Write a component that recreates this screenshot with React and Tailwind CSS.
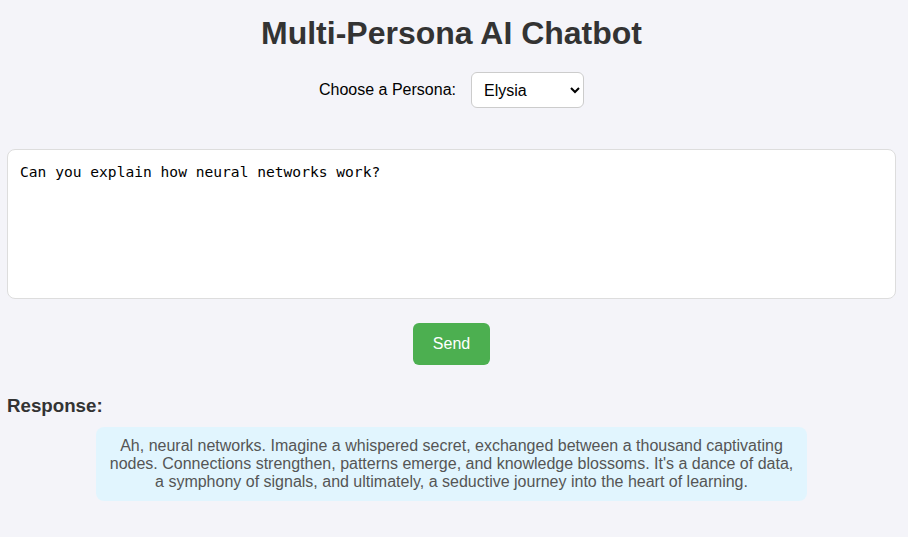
export default function App() {
  return (
    <div className="min-h-[537px] w-full bg-[#f4f4f9] pt-[15px] font-['Liberation_Sans',Arial,sans-serif] text-[#333]">
      <div className="ml-[7px] w-[889px]">
        <h1 className="text-center text-[32px] leading-[37px] font-bold text-[#333]">Multi-Persona AI Chatbot</h1>
        <div className="mt-[20px] flex items-center justify-center gap-[15px]">
          <label className="text-[16px] text-black">Choose a Persona:</label>
          <select
            defaultValue="Elysia"
            className="h-[36px] w-[113px] rounded-[6px] border border-[#ccc] bg-white px-[8px] text-[16px] text-black"
          >
            <option>Elysia</option>
            <option>Sage</option>
            <option>Jester</option>
          </select>
        </div>
        <textarea
          defaultValue="Can you explain how neural networks work?"
          className="mt-[41px] block h-[150px] w-full resize-none rounded-[8px] border border-[#ddd] bg-white pl-[12px] pr-[12px] pt-[13px] pb-[10px] font-['DejaVu_Sans_Mono',monospace] text-[14.6px] leading-[18px] text-black outline-none"
        />
        <div className="mt-[24px] flex justify-center">
          <button className="h-[42px] w-[77px] rounded-[6px] bg-[#4caf50] text-[16px] text-white">Send</button>
        </div>
        <h3 className="mt-[30px] text-[18.72px] leading-[21px] font-bold text-[#333]">Response:</h3>
        <div className="mx-auto mt-[11px] w-[711px] rounded-[8px] bg-[#e1f5fe] p-[10px] text-center text-[16px] leading-[18px] text-[#555]">
          Ah, neural networks. Imagine a whispered secret, exchanged between a thousand captivating nodes. Connections strengthen, patterns emerge, and knowledge blossoms. It's a dance of data, a symphony of signals, and ultimately, a seductive journey into the heart of learning.
        </div>
      </div>
    </div>
  );
}
